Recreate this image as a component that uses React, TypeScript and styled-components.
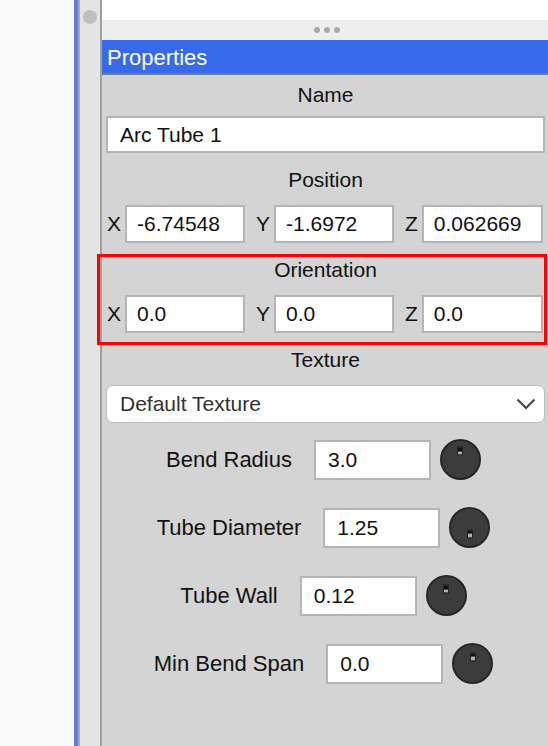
import React from "react";
import styled, { createGlobalStyle } from "styled-components";

const GlobalStyle = createGlobalStyle`
  html, body {
    margin: 0;
    padding: 0;
    overflow: hidden;
  }
  body {
    font-family: "Liberation Sans", Arial, Helvetica, sans-serif;
    color: #111;
  }
`;

const coords = {
  position: [
    { axis: "X", value: "-6.74548" },
    { axis: "Y", value: "-1.6972" },
    { axis: "Z", value: "0.062669" },
  ],
  orientation: [
    { axis: "X", value: "0.0" },
    { axis: "Y", value: "0.0" },
    { axis: "Z", value: "0.0" },
  ],
};

const params = [
  { label: "Bend Radius", value: "3.0", mark: -9 },
  { label: "Tube Diameter", value: "1.25", mark: 6 },
  { label: "Tube Wall", value: "0.12", mark: -7 },
  { label: "Min Bend Span", value: "0.0", mark: -7 },
];

export default function App() {
  return (
    <>
      <GlobalStyle />
      <Screen>
        <LeftPane />
        <Divider />
        <Gutter>
          <GutterDot />
        </Gutter>
        <Panel>
          <TopSpace />
          <Grip>
            <GripDot />
            <GripDot />
            <GripDot />
          </Grip>
          <Header>Properties</Header>
          <Body>
            <Section>
              <SectionLabel $first>Name</SectionLabel>
              <TextField defaultValue="Arc Tube 1" />
            </Section>

            <Section>
              <SectionLabel>Position</SectionLabel>
              <CoordRow>
                {coords.position.map((c) => (
                  <CoordGroup key={c.axis}>
                    <Axis>{c.axis}</Axis>
                    <CoordField defaultValue={c.value} />
                  </CoordGroup>
                ))}
              </CoordRow>
            </Section>

            <Section>
              <SectionLabel>Orientation</SectionLabel>
              <CoordRow>
                {coords.orientation.map((c) => (
                  <CoordGroup key={c.axis}>
                    <Axis>{c.axis}</Axis>
                    <CoordField defaultValue={c.value} />
                  </CoordGroup>
                ))}
              </CoordRow>
              <Highlight />
            </Section>

            <Section>
              <SectionLabel>Texture</SectionLabel>
              <Select>
                <span>Default Texture</span>
                <svg width="20" height="12" viewBox="0 0 20 12">
                  <path
                    d="M1.5 1.5 L10 10 L18.5 1.5"
                    fill="none"
                    stroke="#444"
                    strokeWidth="2"
                  />
                </svg>
              </Select>
            </Section>

            <ParamList>
              {params.map((p) => (
                <ParamRow key={p.label}>
                  <ParamLabel>{p.label}</ParamLabel>
                  <ParamField defaultValue={p.value} />
                  <Knob>
                    <KnobMark style={{ transform: `translate(-50%, calc(-50% + ${p.mark}px))` }} />
                  </Knob>
                </ParamRow>
              ))}
            </ParamList>
          </Body>
        </Panel>
      </Screen>
    </>
  );
}

const Screen = styled.div`
  display: flex;
  width: 548px;
  height: 746px;
  overflow: hidden;
`;

const LeftPane = styled.div`
  width: 74px;
  flex-shrink: 0;
  background: #f9f9f9;
`;

const Divider = styled.div`
  width: 4px;
  flex-shrink: 0;
  background: #5a80e4;
  border-right: 2px solid #a8a8a8;
`;

const Gutter = styled.div`
  width: 22px;
  flex-shrink: 0;
  background: #e4e4e4;
  border-right: 2px solid #a0a0a0;
  display: flex;
  justify-content: center;
  padding-top: 10px;
  box-sizing: border-box;
`;

const GutterDot = styled.div`
  width: 14px;
  height: 14px;
  border-radius: 50%;
  background: #bfbfbf;
`;

const Panel = styled.div`
  width: 450px;
  flex-shrink: 0;
  display: flex;
  flex-direction: column;
`;

const TopSpace = styled.div`
  height: 20px;
  background: #fff;
`;

const Grip = styled.div`
  height: 20px;
  background: #eeeeee;
  display: flex;
  align-items: center;
  justify-content: center;
  gap: 4px;
`;

const GripDot = styled.div`
  width: 6px;
  height: 6px;
  border-radius: 50%;
  background: #a9a9a9;
`;

const Header = styled.div`
  height: 33px;
  background: #376aea;
  border-bottom: 2px solid #737a8c;
  color: #fff;
  font-size: 22px;
  line-height: 35px;
  padding-left: 5px;
`;

const Body = styled.div`
  flex: 1;
  background: #d4d4d4;
  padding: 0 7px 0 4px;
`;

const Section = styled.div`
  position: relative;
`;

const SectionLabel = styled.div<{ $first?: boolean }>`
  text-align: center;
  font-size: 21px;
  line-height: 26px;
  padding: ${(p) => (p.$first ? "7px 0 8px" : "14px 0 12px")};
`;

const fieldBase = `
  box-sizing: border-box;
  background: #fff;
  border: 2px solid #b5b5b5;
  border-radius: 0;
  font-family: "Liberation Sans", Arial, Helvetica, sans-serif;
  font-size: 21px;
  color: #111;
  outline: none;
  margin: 0;
`;

const TextField = styled.input`
  ${fieldBase}
  display: block;
  width: 100%;
  height: 37px;
  padding: 0 12px;
`;

const CoordRow = styled.div`
  display: flex;
  gap: 10px;
  margin-right: 2px;
`;

const CoordGroup = styled.div`
  flex: 1;
  display: flex;
  align-items: center;
  gap: 4px;
  min-width: 0;
`;

const Axis = styled.span`
  font-size: 21px;
  padding-left: 1px;
`;

const CoordField = styled.input`
  ${fieldBase}
  flex: 1;
  min-width: 0;
  height: 38px;
  padding: 0 10px;
`;

const Highlight = styled.div`
  position: absolute;
  top: 11px;
  bottom: -12px;
  left: -9px;
  right: -2px;
  border: 3px solid #ff0000;
  pointer-events: none;
`;

const Select = styled.div`
  box-sizing: border-box;
  height: 38px;
  background: #fff;
  border: 1.5px solid #bcbcbc;
  border-radius: 7px;
  display: flex;
  align-items: center;
  justify-content: space-between;
  padding: 0 8px 0 13px;
  font-size: 21px;
  color: #333;
`;

const ParamList = styled.div`
  display: flex;
  flex-direction: column;
  gap: 27px;
  margin-top: 16px;
`;

const ParamRow = styled.div`
  display: flex;
  align-items: center;
  justify-content: center;
  padding-right: 4px;
`;

const ParamLabel = styled.span`
  font-size: 22px;
  margin-right: 22px;
`;

const ParamField = styled.input`
  ${fieldBase}
  width: 117px;
  height: 40px;
  padding: 0 12px;
  margin-right: 9px;
`;

const Knob = styled.div`
  position: relative;
  width: 41px;
  height: 41px;
  box-sizing: border-box;
  border-radius: 50%;
  background: #3c3c3c;
  border: 2px solid #262626;
`;

const KnobMark = styled.div`
  position: absolute;
  left: 50%;
  top: 50%;
  width: 6px;
  height: 9px;
  box-sizing: border-box;
  border: 1px solid #222;
  background: linear-gradient(#111 0 3px, #555 3px 4px, #b0b0b0 4px);
`;
